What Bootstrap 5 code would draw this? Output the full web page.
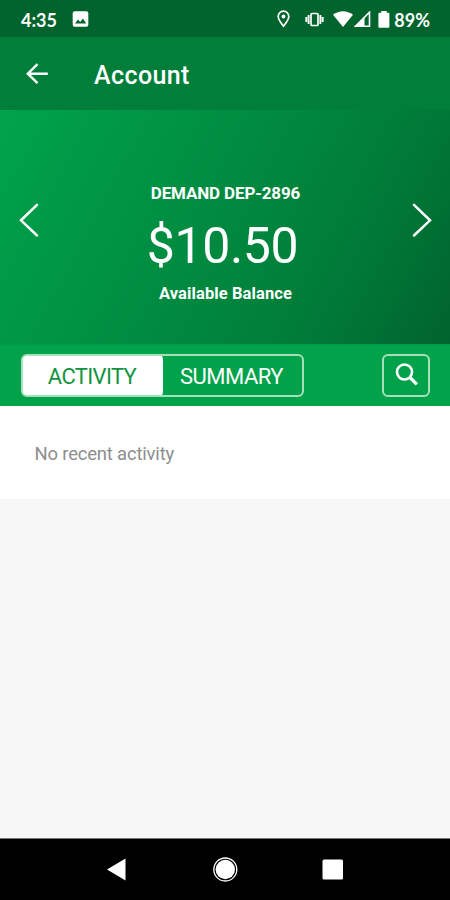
<!DOCTYPE html>
<html lang="en">
<head>
<meta charset="utf-8">
<meta name="viewport" content="width=device-width, initial-scale=1">
<title>Account</title>
<link href="https://cdn.jsdelivr.net/npm/bootstrap@5.3.0/dist/css/bootstrap.min.css" rel="stylesheet">
<style>
body{font-family:Roboto,"Liberation Sans",sans-serif;background:#f7f7f7;line-height:1}
svg{display:block;flex:none}
.screen{height:900px;width:450px}
.status{height:37px;background:#00642c;font-family:Lato,Roboto,sans-serif;font-weight:700;font-size:18px;padding:2px 20px 0 21px}
.clock{width:51px}
.vibrate{margin-left:14px}
.wifi{margin-left:9px}
.signal{margin-left:1px}
.battery{margin-left:7px}
.level{margin-left:4px}
.appbar{height:73px;background:#007e3a;padding:1px 0 0 25px}
.title{font-size:25px;font-weight:500;margin-left:45px;padding-top:2px;letter-spacing:.4px}
.hero{height:234px;background:linear-gradient(118deg,#00a34b 0%,#009545 28%,#00853d 57%,#007a38 75%,#00632d 100%);padding:0 17px 0 18px}
.prev,.next{margin-top:-14px}
.acct{font-size:17px;font-weight:700;margin-top:75px;letter-spacing:-.15px}
.amount{font-size:50px;margin:19px 6px 0 0;letter-spacing:-.4px}
.caption-line{font-size:16.5px;font-weight:700;margin-top:15px;letter-spacing:.1px}
.tabs{height:62px;background:#00a24a;padding:0 20px 0 21px;border-top:1px solid #009b46}
.seg{width:283px;height:43px;border:2px solid #a6dfbb;border-radius:6px;overflow:hidden}
.seg .btn{font-size:22px;line-height:1;letter-spacing:-.5px;border:0;border-radius:0;padding:2px 0 0;color:#fff}
.seg .btn.active{background:#fff;color:#12943f;border-radius:0 3px 3px 0;letter-spacing:-.65px;box-shadow:0 0 0 2px #fff}
.seg .on{flex:0 0 138px}
.find{width:48px;height:43px;border:2px solid #a6dfbb;border-radius:6px;background:none}
.empty{height:93px;font-size:18.5px;letter-spacing:-.2px;color:#8e8e8e;padding:4px 0 0 34.5px}
.navkeys{height:62px;border-top:1px solid #777}
</style>
</head>
<body>
<div class="screen d-flex flex-column overflow-hidden">
  <div class="status d-flex align-items-center text-white">
    <div class="clock">4:35</div>
    <svg width="17" height="17" viewBox="0 0 17 17"><rect x=".7" y=".2" width="15.6" height="15.6" rx="2" fill="#fff"/><path d="M3 12.500l3-4 2.200 2.600L11 7.500l3.200 5z" fill="#00642c"/></svg>
    <div class="d-flex align-items-center ms-auto">
      <svg width="15" height="19" viewBox="0 0 15 19" fill="none" stroke="#fff" stroke-width="1.700"><path d="M7.500 16.200C5 13 2.200 9.800 2.200 6.500a5.300 5.300 0 0 1 10.600 0c0 3.300-2.800 6.500-5.300 9.700z"/><circle cx="7.500" cy="6.500" r="1.900" fill="#fff" stroke="none"/></svg>
      <svg class="vibrate" width="19" height="16" viewBox="0 0 19 16" fill="none" stroke="#fff"><rect x="6" y="1.500" width="7" height="12" rx="1" stroke-width="1.700"/><path d="M3.600 3v9M15.400 3v9M1.300 5v5M17.700 5v5" stroke-width="1.900"/></svg>
      <svg class="wifi" width="20" height="17" viewBox="0 0 20 17" fill="#fff"><path d="M0 3.700C6-1 14-1 20 3.700L10 16z"/></svg>
      <svg class="signal" width="17" height="17" viewBox="0 0 17 17"><path d="M1.500 15.200L15.500 1.200v14z" fill="none" stroke="#fff" stroke-width="1.600"/><path d="M0 16L10.500 5.500V16z" fill="#fff"/></svg>
      <svg class="battery" width="12" height="18" viewBox="0 0 12 18" fill="#fff"><path d="M3.300 0h5.400v1.700h1.900q.8 0 .8 1v13q0 1-1 1H1.400q-1 0-1-1v-13q0-1 1-1h1.900z"/></svg>
      <span class="level">89%</span>
    </div>
  </div>
  <div class="appbar d-flex align-items-center text-white">
    <svg width="24" height="22" viewBox="0 0 24 22" fill="none" stroke="#fff" stroke-width="2.400"><path d="M22.800 10.700H3.200M12.500 1.200L2.800 10.700l9.700 9.500"/></svg>
    <div class="title">Account</div>
  </div>
  <div class="hero d-flex justify-content-between align-items-center text-white">
    <svg class="prev" width="22" height="36" viewBox="0 0 22 36" fill="none" stroke="#fff" stroke-width="2.500" stroke-linecap="round"><path d="M19 2.800L3 18.300l16 15.200"/></svg>
    <div class="align-self-start text-center">
      <div class="acct">DEMAND DEP-2896</div>
      <div class="amount">$10.50</div>
      <div class="caption-line">Available Balance</div>
    </div>
    <svg class="next" width="22" height="36" viewBox="0 0 22 36" fill="none" stroke="#fff" stroke-width="2.500" stroke-linecap="round"><path d="M3 2.800L19 18.300 3 33.500"/></svg>
  </div>
  <div class="tabs d-flex align-items-center justify-content-between">
    <div class="seg d-flex">
      <button class="btn active on">ACTIVITY</button>
      <button class="btn flex-fill">SUMMARY</button>
    </div>
    <button class="find d-flex align-items-center justify-content-center p-0">
      <svg width="25" height="25" viewBox="0 0 25 25" fill="none" stroke="#fff"><circle cx="10.500" cy="9" r="7.500" stroke-width="2.600"/><path d="M15.500 14l7.300 7.300" stroke-width="3.200"/></svg>
    </button>
  </div>
  <div class="empty bg-white d-flex align-items-center">No recent activity</div>
  <div class="flex-fill"></div>
  <div class="navkeys bg-black d-flex justify-content-center align-items-center">
    <svg width="240" height="28" viewBox="0 0 240 28" fill="#fff"><path d="M2 13.500L20.500 2.500v22z"/><circle cx="120.300" cy="13.500" r="11.500" fill="none" stroke="#fff" stroke-width="1.300"/><circle cx="120.300" cy="13.500" r="9.700"/><rect x="217.500" y="3.500" width="20.500" height="20" rx="1.500"/></svg>
  </div>
</div>
<script src="https://cdn.jsdelivr.net/npm/bootstrap@5.3.0/dist/js/bootstrap.bundle.min.js"></script>
</body>
</html>
